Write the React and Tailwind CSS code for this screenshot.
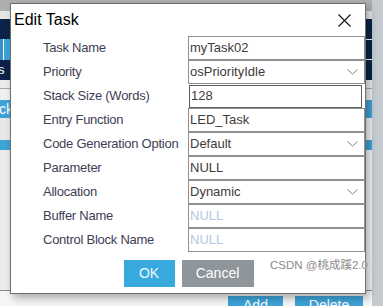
const ROWS = [
  { label: 'Task Name', value: 'myTask02' },
  { label: 'Priority', value: 'osPriorityIdle', select: true },
  { label: 'Stack Size (Words)', value: '128', focused: true },
  { label: 'Entry Function', value: 'LED_Task' },
  { label: 'Code Generation Option', value: 'Default', select: true },
  { label: 'Parameter', value: 'NULL' },
  { label: 'Allocation', value: 'Dynamic', select: true },
  { label: 'Buffer Name', value: 'NULL', placeholder: true },
  { label: 'Control Block Name', value: 'NULL', placeholder: true },
];

function Chevron() {
  return (
    <svg width="11" height="6" viewBox="0 0 11 6" className="shrink-0">
      <path d="M0.5 0.5 L5.5 5 L10.5 0.5" fill="none" stroke="#808080" strokeWidth="1" />
    </svg>
  );
}

function Row({ label, value, select, focused, placeholder }) {
  return (
    <div className="flex h-[24px] items-center">
      <div className="w-[145px] shrink-0 whitespace-nowrap text-[13px] tracking-[-0.25px] text-[#3e3e52]">
        {label}
      </div>
      <div
        className={
          focused
            ? 'ml-[1px] mr-[3px] flex h-[23px] flex-1 items-center border border-[#5a5f64] px-[1px]'
            : 'flex h-[24px] flex-1 items-center border border-[#8b9197] pl-[1px] pr-[6px]'
        }
      >
        <span
          className={
            placeholder
              ? 'flex-1 text-[13px] text-[#b4c6e2]'
              : 'flex-1 text-[13px] text-[#3f3a3a]'
          }
        >
          {value}
        </span>
        {select && <Chevron />}
      </div>
    </div>
  );
}

export default function App() {
  return (
    <div
      className="relative flex h-[306px] w-[383px] overflow-hidden bg-[#f4f4f4]"
      style={{ fontFamily: '"Liberation Sans", Arial, sans-serif' }}
    >
      {/* app behind the dialog */}
      <div className="flex flex-1 flex-col">
        <div className="h-[11px] bg-[#adafb1]" />
        <div className="h-[8px] bg-[#e7e7e7]" />
        <div className="h-[20px] bg-[#0b2349]" />
        <div className="flex h-[21px] bg-[#0b2349]">
          <div className="w-[3px] bg-[#3a8fc9]" />
          <div className="w-[1px] bg-white" />
          <div className="w-[6px] bg-[#3ba2d8]" />
          <div className="flex-1" />
          <div className="w-[7px] border-y border-white" />
        </div>
        <div className="flex h-[20px] items-center bg-[#0b2349] text-[13px] text-white">
          <span className="-ml-[2px]">s</span>
        </div>
        <div className="h-[8px] bg-[#ececec]" />
        <div className="h-[1px] bg-[#a8a8a8]" />
        <div className="h-[11px] bg-[#f1f1f1]" />
        <div className="flex h-[18px] items-center bg-[#3ea4d8] text-[14px] text-white">
          <span className="-ml-[1px]">ck</span>
        </div>
        <div className="h-[22px] bg-gradient-to-r from-[#e8e8e8] to-[#f3f3f3]" />
        <div className="h-[10px] bg-[#3ea4d8]" />
        <div className="h-[140px] bg-gradient-to-r from-[#ebebeb] to-[#f4f4f4]" />
        <div className="h-[1px] bg-[#8c8c8c]" />
        <div className="flex flex-1 items-end gap-[12px] bg-[#f6f6f6] pl-[228px]">
          <div className="flex h-[10px] w-[55px] items-end justify-center overflow-hidden bg-[#3ea4d8] text-[14px] leading-[14px] text-white">
            <span className="translate-y-[6px]">Add</span>
          </div>
          <div className="flex h-[10px] w-[68px] items-end justify-center overflow-hidden bg-[#3ea4d8] text-[14px] leading-[14px] text-white">
            <span className="translate-y-[6px]">Delete</span>
          </div>
        </div>
      </div>
      <div className="w-[11px] bg-[#c4ccd2]" />

      {/* dialog */}
      <div className="absolute left-[10px] top-[3px] flex h-[291px] w-[356px] flex-col border border-[#6e6e6e] bg-white shadow-[3px_4px_8px_rgba(0,0,0,0.3)]">
        <div className="flex h-[32px] items-center justify-between pl-[3px] pr-[14px]">
          <span className="text-[16px] text-black">Edit Task</span>
          <svg width="13" height="13" viewBox="0 0 13 13">
            <path d="M0.5 0.5 L12.5 12.5 M12.5 0.5 L0.5 12.5" stroke="#111" strokeWidth="1.1" />
          </svg>
        </div>
        <div className="flex flex-col pl-[32px] pr-0">
          {ROWS.map((r) => (
            <Row key={r.label} {...r} />
          ))}
        </div>
        <div className="mt-[8px] flex justify-center gap-[7px] pl-[1px]">
          <div className="flex h-[27px] w-[51px] items-center justify-center bg-[#38a9dc] text-[14px] text-[#eef8ff]">
            OK
          </div>
          <div className="flex h-[27px] w-[72px] items-center justify-center bg-[#8e959b] text-[14px] text-white">
            Cancel
          </div>
        </div>
      </div>

      {/* watermark */}
      <div
        className="absolute left-[270px] top-[257px] text-[11.5px] text-[#8a8a8a] [text-shadow:0_0_2px_#fff]"
        style={{ fontFamily: '"Liberation Sans", "Noto Sans CJK SC", sans-serif' }}
      >
        CSDN @桃成蹊2.0
      </div>
    </div>
  );
}
